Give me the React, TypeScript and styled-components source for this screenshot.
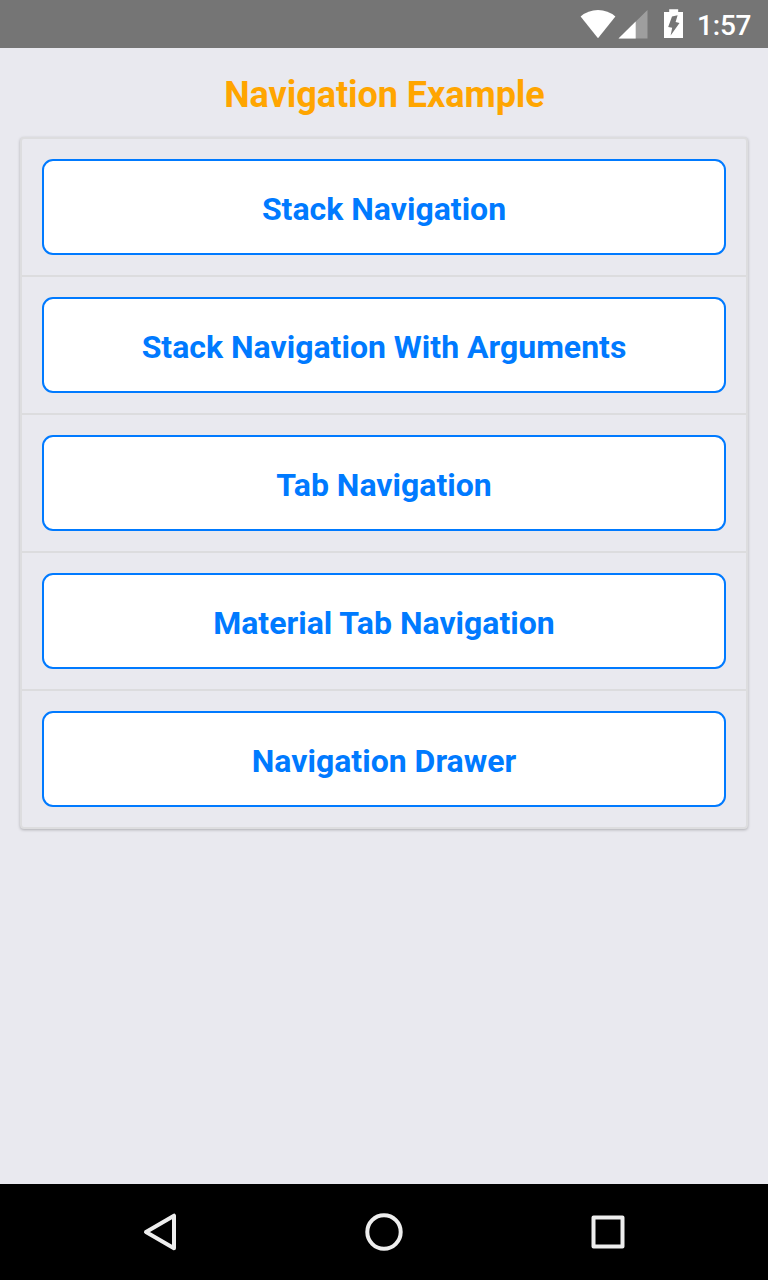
import React from "react";
import styled, { createGlobalStyle } from "styled-components";

const GlobalStyle = createGlobalStyle`
  * { box-sizing: border-box; }
  body { margin: 0; background: #e9e9ef; }
`;

const Screen = styled.div`
  width: 768px;
  height: 1280px;
  display: flex;
  flex-direction: column;
  background: #e9e9ef;
  font-family: Roboto, sans-serif;
  overflow: hidden;
`;

const StatusBar = styled.header`
  height: 48px;
  flex: none;
  display: flex;
  justify-content: flex-end;
  background: #757575;
  color: #fff;
`;

const StatusIcons = styled.svg`
  width: 112px;
  height: 48px;
  display: block;
`;

const Clock = styled.span`
  width: 76px;
  padding-left: 5px;
  font-size: 28px;
  font-weight: 500;
  line-height: 52px;
  letter-spacing: -0.2px;
  white-space: nowrap;
`;

const Content = styled.main`
  flex: 1;
  padding: 20px;
`;

const Title = styled.h1`
  margin: 0 0 20px;
  padding-left: 1px;
  height: 49px;
  font-size: 36px;
  font-weight: 700;
  line-height: 54px;
  letter-spacing: -0.05px;
  text-align: center;
  color: #ffa500;
`;

const Card = styled.section`
  border: 2px solid #dddddf;
  border-radius: 4px;
  box-shadow: 0 1px 3px rgba(0, 0, 0, 0.26);
  background: #e9e9ef;
`;

const Row = styled.div`
  height: 138px;
  padding: 20px;
  border-bottom: 2px solid #dcdcde;
  &:last-child {
    height: 136px;
    border-bottom: 0;
  }
`;

const NavButton = styled.button`
  display: block;
  width: 100%;
  height: 96px;
  padding: 4px 0 0;
  border: 2px solid #007aff;
  border-radius: 11px;
  background: #fff;
  color: #007aff;
  font-family: inherit;
  font-size: 32px;
  font-weight: 700;
`;

const SystemBar = styled.footer`
  height: 96px;
  flex: none;
  display: flex;
  justify-content: center;
  align-items: center;
  gap: 164px;
  background: #000;
`;

const SystemIcon = styled.svg`
  width: 60px;
  height: 60px;
  fill: none;
  stroke: #eee;
  stroke-width: 4;
  stroke-linejoin: round;
`;

const items = [
  "Stack Navigation",
  "Stack Navigation With Arguments",
  "Tab Navigation",
  "Material Tab Navigation",
  "Navigation Drawer",
];

export default function App() {
  return (
    <Screen>
      <GlobalStyle />
      <StatusBar>
        <StatusIcons viewBox="580 0 112 48" fill="#fff">
          <path d="M598 38.200 580.600 16.500Q588 10 598 10T615.400 16.500Z" />
          <path d="M647.500 10V38.500H618.500Z" fillOpacity=".3" />
          <path d="M635.700 21.500V38.500H618.500Z" />
          <path fillRule="evenodd" d="M669.200 9.200h9v2.800h4.800v26h-19V12h5.200ZM672 16.500 677.600 15.200 675.600 22 679.500 23 670.600 35.500 672.200 27.800 668.200 27Z" />
        </StatusIcons>
        <Clock>1:57</Clock>
      </StatusBar>
      <Content>
        <Title>Navigation Example</Title>
        <Card>
          {items.map((label) => (
            <Row key={label}>
              <NavButton>{label}</NavButton>
            </Row>
          ))}
        </Card>
      </Content>
      <SystemBar>
        <SystemIcon viewBox="0 0 60 60"><path d="M44 15.500V48L16 31.800Z" transform="translate(0 -1.800)" /></SystemIcon>
        <SystemIcon viewBox="0 0 60 60"><circle cx="30" cy="30" r="16.700" /></SystemIcon>
        <SystemIcon viewBox="0 0 60 60"><rect x="15.500" y="15.500" width="29" height="29" /></SystemIcon>
      </SystemBar>
    </Screen>
  );
}
